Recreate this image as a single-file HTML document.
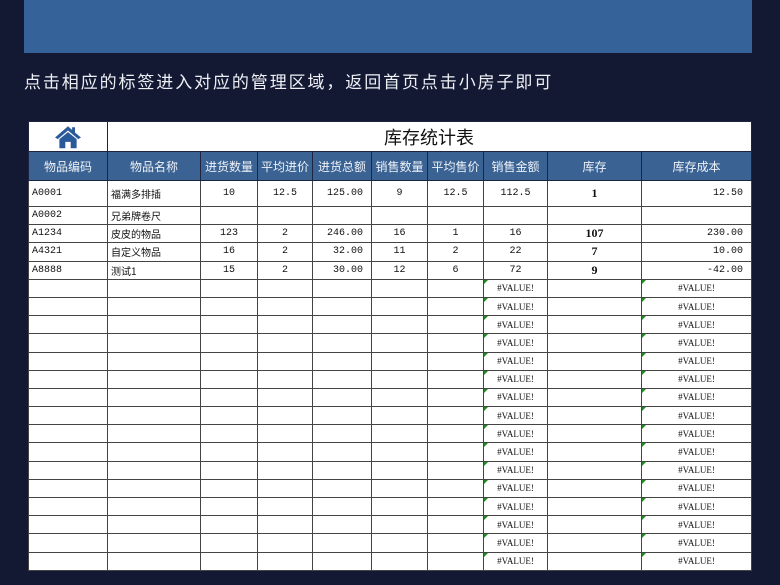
<!DOCTYPE html>
<html><head><meta charset="utf-8">
<style>
*{margin:0;padding:0;box-sizing:border-box}
html,body{width:780px;height:585px;overflow:hidden;background:#131833}
body{position:relative;font-family:"Liberation Sans","Noto Sans CJK SC",sans-serif}
.banner{position:absolute;left:24px;top:0;width:728px;height:53px;background:#36629a}
.tip{position:absolute;left:24px;top:68px;color:#eef0f6;font-size:17px;letter-spacing:1.9px;font-family:"Noto Sans CJK SC",sans-serif;white-space:nowrap}
table{position:absolute;left:28px;top:121px;width:723px;border-collapse:collapse;table-layout:fixed;background:#fff}
td{border:1px solid #444;font-family:"Liberation Mono","Noto Sans CJK SC",monospace;font-size:10px;color:#111;text-align:center;height:18.2px;padding:0 3px;white-space:nowrap;overflow:hidden;position:relative}
tr.title td{height:30px;border-color:#1c2440}
tr.title td.t{text-align:left;padding-left:276px;font-family:"Noto Sans CJK SC",sans-serif;font-size:18px;font-weight:normal;color:#111}
tr.hd td{height:29px;background:#3a6394;color:#eef2f8;font-family:"Noto Sans CJK SC",sans-serif;font-size:12px;border-color:#1c2440;padding:0}
tr.r1 td{height:26px}
.l{text-align:left}.r{text-align:right;padding-right:8px}
.n{font-family:"Liberation Serif",serif;font-size:12px;font-weight:bold}
.zh{font-family:"Noto Sans CJK SC",sans-serif;font-size:10px}
.v::before{content:"";position:absolute;left:0;top:0;border-top:4px solid #1f8a1f;border-right:4px solid transparent}
.v{font-family:"Liberation Serif",serif;font-size:9px}
</style></head><body>
<div class="banner"></div>
<div class="tip">点击相应的标签进入对应的管理区域，返回首页点击小房子即可</div>
<table>
<colgroup><col style="width:79px"><col style="width:93px"><col style="width:57px"><col style="width:55px"><col style="width:59px"><col style="width:56px"><col style="width:56px"><col style="width:64px"><col style="width:94px"><col style="width:110px"></colgroup>
<tr class="title"><td><svg width="28" height="24" viewBox="0 0 26 22" style="display:block;margin:0 auto"><path d="M13 1 L1 11.5 L3.5 13 L13 5 L22.5 13 L25 11.5 L19.5 6.8 V2 H16.8 V4.5 Z" fill="#2a5a9a"/><path d="M5 13 L13 6.5 L21 13 V21.5 H15.5 V15.5 H10.5 V21.5 H5 Z" fill="#2a5a9a"/></svg></td><td class="t" colspan="9">库存统计表</td></tr>
<tr class="hd"><td>物品编码</td><td>物品名称</td><td>进货数量</td><td>平均进价</td><td>进货总额</td><td>销售数量</td><td>平均售价</td><td>销售金额</td><td>库存</td><td>库存成本</td></tr>
<tr class="r1"><td class="l">A0001</td><td class="l zh">福满多排插</td><td>10</td><td>12.5</td><td class="r">125.00</td><td>9</td><td>12.5</td><td>112.5</td><td class="n">1</td><td class="r">12.50</td></tr>
<tr><td class="l">A0002</td><td class="l zh">兄弟牌卷尺</td><td></td><td></td><td></td><td></td><td></td><td></td><td></td><td></td></tr>
<tr><td class="l">A1234</td><td class="l zh">皮皮的物品</td><td>123</td><td>2</td><td class="r">246.00</td><td>16</td><td>1</td><td>16</td><td class="n">107</td><td class="r">230.00</td></tr>
<tr><td class="l">A4321</td><td class="l zh">自定义物品</td><td>16</td><td>2</td><td class="r">32.00</td><td>11</td><td>2</td><td>22</td><td class="n">7</td><td class="r">10.00</td></tr>
<tr><td class="l">A8888</td><td class="l zh">测试1</td><td>15</td><td>2</td><td class="r">30.00</td><td>12</td><td>6</td><td>72</td><td class="n">9</td><td class="r">-42.00</td></tr>
<tr><td></td><td></td><td></td><td></td><td></td><td></td><td></td><td class="v">#VALUE!</td><td></td><td class="v">#VALUE!</td></tr>
<tr><td></td><td></td><td></td><td></td><td></td><td></td><td></td><td class="v">#VALUE!</td><td></td><td class="v">#VALUE!</td></tr>
<tr><td></td><td></td><td></td><td></td><td></td><td></td><td></td><td class="v">#VALUE!</td><td></td><td class="v">#VALUE!</td></tr>
<tr><td></td><td></td><td></td><td></td><td></td><td></td><td></td><td class="v">#VALUE!</td><td></td><td class="v">#VALUE!</td></tr>
<tr><td></td><td></td><td></td><td></td><td></td><td></td><td></td><td class="v">#VALUE!</td><td></td><td class="v">#VALUE!</td></tr>
<tr><td></td><td></td><td></td><td></td><td></td><td></td><td></td><td class="v">#VALUE!</td><td></td><td class="v">#VALUE!</td></tr>
<tr><td></td><td></td><td></td><td></td><td></td><td></td><td></td><td class="v">#VALUE!</td><td></td><td class="v">#VALUE!</td></tr>
<tr><td></td><td></td><td></td><td></td><td></td><td></td><td></td><td class="v">#VALUE!</td><td></td><td class="v">#VALUE!</td></tr>
<tr><td></td><td></td><td></td><td></td><td></td><td></td><td></td><td class="v">#VALUE!</td><td></td><td class="v">#VALUE!</td></tr>
<tr><td></td><td></td><td></td><td></td><td></td><td></td><td></td><td class="v">#VALUE!</td><td></td><td class="v">#VALUE!</td></tr>
<tr><td></td><td></td><td></td><td></td><td></td><td></td><td></td><td class="v">#VALUE!</td><td></td><td class="v">#VALUE!</td></tr>
<tr><td></td><td></td><td></td><td></td><td></td><td></td><td></td><td class="v">#VALUE!</td><td></td><td class="v">#VALUE!</td></tr>
<tr><td></td><td></td><td></td><td></td><td></td><td></td><td></td><td class="v">#VALUE!</td><td></td><td class="v">#VALUE!</td></tr>
<tr><td></td><td></td><td></td><td></td><td></td><td></td><td></td><td class="v">#VALUE!</td><td></td><td class="v">#VALUE!</td></tr>
<tr><td></td><td></td><td></td><td></td><td></td><td></td><td></td><td class="v">#VALUE!</td><td></td><td class="v">#VALUE!</td></tr>
<tr><td></td><td></td><td></td><td></td><td></td><td></td><td></td><td class="v">#VALUE!</td><td></td><td class="v">#VALUE!</td></tr>
</table>
</body></html>
